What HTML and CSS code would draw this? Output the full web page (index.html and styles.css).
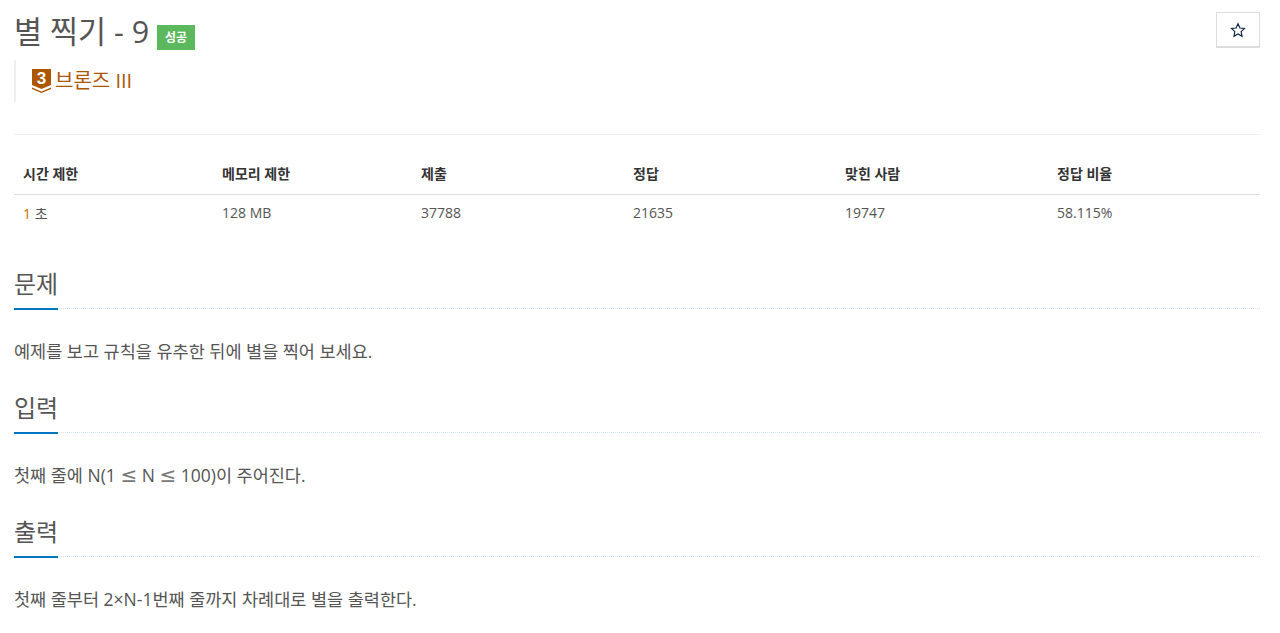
FILE: index.html
```html
<!DOCTYPE html>
<html lang="ko">
<head>
  <meta charset="UTF-8" />
  <title>별 찍기 - 9</title>
  <link rel="stylesheet" href="styles.css">
</head>
<body>
  <div class="page-header">
    <div class="title-row">
      <h1 class="problem-title">별 찍기 - 9 <span class="label-success">성공</span></h1>
      <button class="star-btn" aria-label="즐겨찾기">
        <svg width="16" height="16" viewBox="0 0 24 24" fill="none" stroke="#0b2540" stroke-width="1.700" stroke-linejoin="miter"><path d="M12 2.600l2.900 6.400 6.900.8-5.100 4.700 1.400 6.900-6.100-3.500-6.100 3.500 1.400-6.900-5.100-4.700 6.900-.8z"/></svg>
      </button>
    </div>
    <blockquote class="tier">
      <svg class="tier-badge" width="19" height="24" viewBox="0 0 19 24">
        <path d="M0 0h19v16l-9.500 4L0 16z" fill="#ad5600"/>
        <path d="M0 18.500l9.500 4 9.500-4v1.500L9.500 24 0 20z" fill="#ad5600"/>
        <text x="9.500" y="15" text-anchor="middle" class="tier-num">3</text>
      </svg>
      <span class="tier-name">브론즈 III</span>
    </blockquote>
  </div>

  <table class="info-table">
    <thead>
      <tr>
        <th class="col-a">시간 제한</th>
        <th class="col-a">메모리 제한</th>
        <th class="col-b">제출</th>
        <th class="col-b">정답</th>
        <th class="col-b">맞힌 사람</th>
        <th class="col-b">정답 비율</th>
      </tr>
    </thead>
    <tbody>
      <tr>
        <td><span class="num-orange">1</span> 초</td>
        <td>128 MB</td>
        <td>37788</td>
        <td>21635</td>
        <td>19747</td>
        <td>58.115%</td>
      </tr>
    </tbody>
  </table>

  <section class="section">
    <div class="headline"><h2>문제</h2></div>
    <p>예제를 보고 규칙을 유추한 뒤에 별을 찍어 보세요.</p>
  </section>
  <section class="section">
    <div class="headline"><h2>입력</h2></div>
    <p>첫째 줄에 N(1 <span class="math">≤</span> N <span class="math">≤</span> 100)이 주어진다.</p>
  </section>
  <section class="section">
    <div class="headline"><h2>출력</h2></div>
    <p>첫째 줄부터 2×N-1번째 줄까지 차례대로 별을 출력한다.</p>
  </section>
</body>
</html>
```

FILE: styles.css
```css
body {
  margin: 0;
  padding: 0 20px 0 14px;
  background: #fff;
  color: #555;
  font-family: "Open Sans", "Noto Sans CJK KR", sans-serif;
  font-size: 14px;
  overflow: hidden;
}

.page-header {
  border-bottom: 1px solid #eee;
  height: 134px;
}
.title-row {
  display: flex;
  justify-content: space-between;
  padding-top: 12px;
}
.problem-title {
  margin: 0;
  font-size: 30.500px;
  font-weight: 400;
  line-height: 38px;
  color: #555;
}
.label-success {
  display: inline-block;
  vertical-align: 1px;
  width: 38px;
  height: 25px;
  line-height: 25px;
  text-align: center;
  background: #5cb85c;
  color: #fff;
  font-size: 12px;
  font-weight: 600;
}
.star-btn {
  width: 44px;
  height: 36px;
  padding: 0;
  background: #fff;
  border: 1px solid #ddd;
  border-bottom-width: 2px;
  display: flex;
  align-items: center;
  justify-content: center;
}
.tier {
  margin: 10px 0 0;
  height: 42px;
  border-left: 2px solid #eee;
  padding-left: 16px;
  display: flex;
  align-items: center;
  gap: 4px;
}
.tier-badge {
  display: block;
}
.tier-num {
  font-family: "Liberation Sans", sans-serif;
  font-size: 17px;
  font-weight: 700;
  fill: #fff;
}
.tier-name {
  font-size: 20px;
  line-height: 40px;
  color: #ad5600;
}

.info-table {
  width: 1246px;
  margin-top: 20px;
  margin-bottom: 7px;
  border-collapse: collapse;
  table-layout: fixed;
  color: #555;
}
.col-a { width: 199px; }
.col-b { width: 212px; }
.info-table th {
  box-sizing: border-box;
  height: 39px;
  padding: 0 9px 2px;
  text-align: left;
  font-size: 14px;
  font-weight: 700;
  color: #333;
  border-bottom: 1px solid #ddd;
}
.info-table td {
  box-sizing: border-box;
  height: 39px;
  padding: 0 9px 2px;
  font-size: 14px;
}
.num-orange {
  color: #c46a00;
}

.headline {
  box-sizing: border-box;
  height: 69px;
  border-bottom: 1px dotted #d5e2f0;
}
.headline h2 {
  display: inline-block;
  box-sizing: border-box;
  height: 70px;
  margin: 0;
  padding-top: 30px;
  border-bottom: 2px solid #0076c0;
  font-size: 24px;
  font-weight: 400;
  line-height: 28px;
  color: #555;
}
.section p {
  margin: 0;
  padding: 29px 0 0;
  font-size: 17.500px;
  line-height: 26px;
  color: #555;
}
.math {
  font-family: "DejaVu Sans", sans-serif;
  font-size: 20px;
  line-height: 20px;
  color: #777;
}
```
